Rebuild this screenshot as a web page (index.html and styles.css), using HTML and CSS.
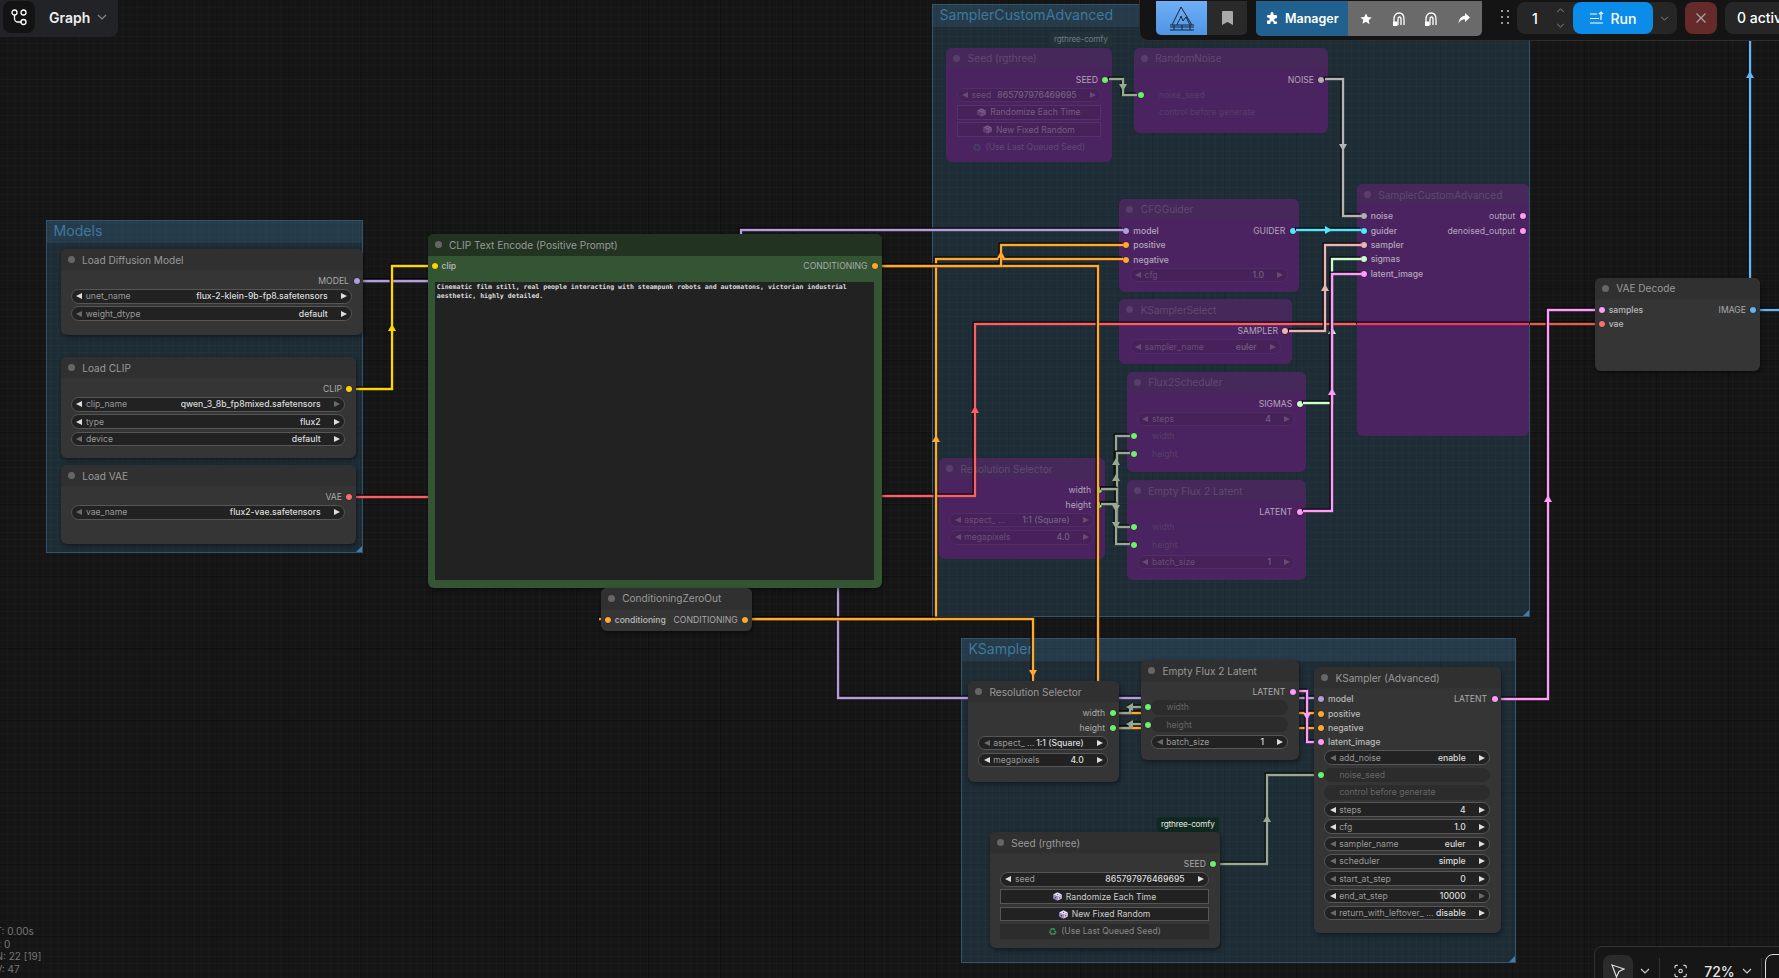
FILE: index.html
```html
<!DOCTYPE html>
<html lang="en">
<head>
    <meta charset="UTF-8">
    <title>ComfyUI Graph</title>
    <link rel="stylesheet" href="styles.css">
</head>
<body>
    <svg class="defs">
        <defs>
            <path id="arrow" d="M0-4 4 3H-4Z"/>
            <symbol id="dice" viewBox="0 0 10 10">
                <path d="M5 .2 9.800 2.700 5 5.200.2 2.700Z" fill="#ece8f4"/>
                <path d="M.2 2.700 5 5.200v4.600L.2 7.300Z" fill="#a890cc"/>
                <path d="M9.800 2.700 5 5.200v4.600l4.800-2.500Z" fill="#d4c8e8"/>
                <circle cx="5" cy="2.700" r=".8" fill="#7a4fa8"/>
                <circle cx="2.600" cy="6.300" r=".8" fill="#4d2f7a"/>
                <circle cx="7.400" cy="6.300" r=".8" fill="#7a4fa8"/>
            </symbol>
            <symbol id="arch" viewBox="0 0 12 14">
                <path d="M1 13V7.500C1 3.500 3 1 6 1s5 2.500 5 6.500V13" fill="none" stroke="#fff" stroke-width="1.300"/>
                <path d="M5 13V7c0-1 .5-2 1.300-2S8 6 8 7v6" fill="none" stroke="#fff" stroke-width="1.300"/>
                <rect x="0" y="9.500" width="4.500" height="4.500" fill="#fff"/>
            </symbol>
        </defs>
    </svg>

    <div class="canvas">
        <!-- groups -->
        <div class="group g-models">
            <div class="group-title">Models</div>
        </div>
        <div class="group g-custom">
            <div class="group-title">SamplerCustomAdvanced</div>
        </div>
        <div class="group g-ksampler">
            <div class="group-title">KSampler</div>
        </div>

        <!-- bypassed nodes, the links run over these -->
        <div class="badge badge-dim">rgthree-comfy</div>
        <div class="node bypass n-seed-by">
            <div class="node-title"><i class="dot"></i>Seed (rgthree)</div>
            <div class="slots">
                <div class="slot"><span></span><span class="out">SEED<i class="port p-int"></i></span></div>
            </div>
            <div class="widgets">
                <div class="widget"><i class="tri-l"></i><span class="w-name">seed</span><span class="w-val">865797976469695</span><i class="tri-r"></i></div>
                <div class="btn"><svg class="dice"><use href="#dice"/></svg>Randomize Each Time</div>
                <div class="btn"><svg class="dice"><use href="#dice"/></svg>New Fixed Random</div>
                <div class="btn btn-off"><span class="recycle">♻</span>(Use Last Queued Seed)</div>
            </div>
        </div>
        <div class="node bypass n-noise">
            <div class="node-title"><i class="dot"></i>RandomNoise</div>
            <div class="slots">
                <div class="slot"><span></span><span class="out">NOISE<i class="port p-noise"></i></span></div>
            </div>
            <div class="widgets">
                <div class="widget row-off"><i class="port p-int on-widget"></i>noise_seed</div>
                <div class="widget row-off">control before generate</div>
            </div>
        </div>
        <div class="node bypass n-guider">
            <div class="node-title"><i class="dot"></i>CFGGuider</div>
            <div class="slots">
                <div class="slot"><span class="in"><i class="port p-model"></i>model</span><span class="out">GUIDER<i class="port p-guider"></i></span></div>
                <div class="slot"><span class="in"><i class="port p-cond"></i>positive</span></div>
                <div class="slot"><span class="in"><i class="port p-cond"></i>negative</span></div>
            </div>
            <div class="widgets">
                <div class="widget"><i class="tri-l"></i><span class="w-name">cfg</span><span class="w-val">1.0</span><i class="tri-r"></i></div>
            </div>
        </div>
        <div class="node bypass n-select">
            <div class="node-title"><i class="dot"></i>KSamplerSelect</div>
            <div class="slots">
                <div class="slot"><span></span><span class="out">SAMPLER<i class="port p-sampler"></i></span></div>
            </div>
            <div class="widgets">
                <div class="widget"><i class="tri-l"></i><span class="w-name">sampler_name</span><span class="w-val">euler</span><i class="tri-r"></i></div>
            </div>
        </div>
        <div class="node bypass n-sched">
            <div class="node-title"><i class="dot"></i>Flux2Scheduler</div>
            <div class="slots">
                <div class="slot"><span></span><span class="out">SIGMAS<i class="port p-sigmas"></i></span></div>
            </div>
            <div class="widgets">
                <div class="widget"><i class="tri-l"></i><span class="w-name">steps</span><span class="w-val">4</span><i class="tri-r"></i></div>
                <div class="widget row-off"><i class="port p-int on-widget"></i>width</div>
                <div class="widget row-off"><i class="port p-int on-widget"></i>height</div>
            </div>
        </div>
        <div class="node bypass n-latent-by">
            <div class="node-title"><i class="dot"></i>Empty Flux 2 Latent</div>
            <div class="slots">
                <div class="slot"><span></span><span class="out">LATENT<i class="port p-latent"></i></span></div>
            </div>
            <div class="widgets">
                <div class="widget row-off"><i class="port p-int on-widget"></i>width</div>
                <div class="widget row-off"><i class="port p-int on-widget"></i>height</div>
                <div class="widget"><i class="tri-l"></i><span class="w-name">batch_size</span><span class="w-val">1</span><i class="tri-r"></i></div>
            </div>
        </div>
        <div class="node bypass n-res-by">
            <div class="node-title"><i class="dot"></i>Resolution Selector</div>
            <div class="slots">
                <div class="slot"><span></span><span class="out">width<i class="port p-int"></i></span></div>
                <div class="slot"><span></span><span class="out">height<i class="port p-int"></i></span></div>
            </div>
            <div class="widgets">
                <div class="widget"><i class="tri-l"></i><span class="w-name">aspect_ ...</span><span class="w-val">1:1 (Square)</span><i class="tri-r"></i></div>
                <div class="widget"><i class="tri-l"></i><span class="w-name">megapixels</span><span class="w-val">4.0</span><i class="tri-r"></i></div>
            </div>
        </div>
        <div class="node bypass n-custom">
            <div class="node-title"><i class="dot"></i>SamplerCustomAdvanced</div>
            <div class="slots">
                <div class="slot"><span class="in"><i class="port p-noise"></i>noise</span><span class="out">output<i class="port p-latent"></i></span></div>
                <div class="slot"><span class="in"><i class="port p-guider"></i>guider</span><span class="out">denoised_output<i class="port p-latent"></i></span></div>
                <div class="slot"><span class="in"><i class="port p-sampler"></i>sampler</span></div>
                <div class="slot"><span class="in"><i class="port p-sigmas"></i>sigmas</span></div>
                <div class="slot"><span class="in"><i class="port p-latent"></i>latent_image</span></div>
            </div>
        </div>

        <!-- links -->
        <svg class="wires" width="1779" height="978">
            <g class="c-model">
                <path class="wire" d="M363 281H741V230H1123"/>
                <path class="wire" d="M363 281H838V698H1320"/>
            </g>
            <g class="c-clip">
                <path class="wire" d="M356 389H392V266H430"/>
                <use href="#arrow" transform="translate(392 328)"/>
            </g>
            <g class="c-vae">
                <path class="wire" d="M356 497H430"/>
                <path class="wire" d="M880 496H975V324H1357"/>
                <use href="#arrow" transform="translate(975 410)"/>
            </g>
            <path class="wire c-vae-over" d="M1357 324H1530"/>
            <path class="wire c-vae-out" d="M1530 324H1600"/>
            <g class="c-cond">
                <path class="wire" d="M599 619H602"/>
                <path class="wire" d="M745 619H936V259H1123"/>
                <path class="wire" d="M745 619H1033V728H1320"/>
                <path class="wire" d="M878 266H1098V713H1320"/>
                <path class="wire" d="M878 266H1001V245H1123"/>
                <use href="#arrow" transform="translate(936 439)"/>
                <use href="#arrow" transform="translate(1001 255)"/>
                <use href="#arrow" transform="translate(1033 673) rotate(180)"/>
            </g>
            <g class="c-int">
                <path class="wire" d="M1109 79H1123V95H1137"/>
                <use href="#arrow" transform="translate(1123 87) rotate(180)"/>
                <path class="wire" d="M1101 489H1116V436H1130"/>
                <path class="wire" d="M1101 504H1117V453H1130"/>
                <path class="wire" d="M1101 489H1117V527H1130"/>
                <path class="wire" d="M1101 504H1116V544H1130"/>
                <use href="#arrow" transform="translate(1116 462)"/>
                <use href="#arrow" transform="translate(1116 478)"/>
                <use href="#arrow" transform="translate(1116 508) rotate(180)"/>
                <use href="#arrow" transform="translate(1116 525) rotate(180)"/>
                <path class="wire" d="M1112 713H1130V707H1148"/>
                <path class="wire" d="M1112 728H1130V724H1148"/>
                <use href="#arrow" transform="translate(1130 707) rotate(-90)"/>
                <use href="#arrow" transform="translate(1130 724) rotate(-90)"/>
                <path class="wire" d="M1214 864H1267V775H1320"/>
                <use href="#arrow" transform="translate(1267 819)"/>
            </g>
            <g class="c-noise">
                <path class="wire" d="M1325 79H1343V216H1361"/>
                <use href="#arrow" transform="translate(1343 147) rotate(180)"/>
            </g>
            <g class="c-guider">
                <path class="wire" d="M1296 230H1361"/>
                <use href="#arrow" transform="translate(1328 230) rotate(90)"/>
            </g>
            <g class="c-sampler">
                <path class="wire" d="M1289 331H1325V245H1361"/>
                <use href="#arrow" transform="translate(1325 288)"/>
            </g>
            <g class="c-sigmas">
                <path class="wire" d="M1303 403H1332V259H1361"/>
                <use href="#arrow" transform="translate(1332 331)"/>
            </g>
            <g class="c-latent">
                <path class="wire" d="M1303 511H1332V274H1361"/>
                <use href="#arrow" transform="translate(1332 392)"/>
                <path class="wire" d="M1493 699H1548V310H1602"/>
                <use href="#arrow" transform="translate(1548 499)"/>
                <path class="wire" d="M1292 691H1307V742H1320"/>
                <use href="#arrow" transform="translate(1307 716) rotate(180)"/>
            </g>
            <g class="c-image">
                <path class="wire" d="M1750 0V290"/>
                <path class="wire" d="M1753 310H1779"/>
                <use href="#arrow" transform="translate(1750 75)"/>
            </g>
        </svg>

        <!-- regular nodes -->
        <div class="node n-unet">
            <div class="node-title"><i class="dot"></i>Load Diffusion Model</div>
            <div class="slots">
                <div class="slot"><span></span><span class="out">MODEL<i class="port p-model"></i></span></div>
            </div>
            <div class="widgets">
                <div class="widget"><i class="tri-l"></i><span class="w-name">unet_name</span><span class="w-val">flux-2-klein-9b-fp8.safetensors</span><i class="tri-r"></i></div>
                <div class="widget"><i class="tri-l off"></i><span class="w-name">weight_dtype</span><span class="w-val">default</span><i class="tri-r"></i></div>
            </div>
        </div>
        <div class="node n-clip">
            <div class="node-title"><i class="dot"></i>Load CLIP</div>
            <div class="slots">
                <div class="slot"><span></span><span class="out">CLIP<i class="port p-clip"></i></span></div>
            </div>
            <div class="widgets">
                <div class="widget"><i class="tri-l"></i><span class="w-name">clip_name</span><span class="w-val">qwen_3_8b_fp8mixed.safetensors</span><i class="tri-r off"></i></div>
                <div class="widget"><i class="tri-l"></i><span class="w-name">type</span><span class="w-val">flux2</span><i class="tri-r"></i></div>
                <div class="widget"><i class="tri-l off"></i><span class="w-name">device</span><span class="w-val">default</span><i class="tri-r"></i></div>
            </div>
        </div>
        <div class="node n-vae">
            <div class="node-title"><i class="dot"></i>Load VAE</div>
            <div class="slots">
                <div class="slot"><span></span><span class="out">VAE<i class="port p-vae"></i></span></div>
            </div>
            <div class="widgets">
                <div class="widget"><i class="tri-l off"></i><span class="w-name">vae_name</span><span class="w-val">flux2-vae.safetensors</span><i class="tri-r"></i></div>
            </div>
        </div>
        <div class="node green n-prompt">
            <div class="node-title"><i class="dot"></i>CLIP Text Encode (Positive Prompt)</div>
            <div class="slots">
                <div class="slot"><span class="in"><i class="port p-clip"></i>clip</span><span class="out">CONDITIONING<i class="port p-cond"></i></span></div>
            </div>
            <div class="prompt">Cinematic film still, real people interacting with steampunk robots and automatons, victorian industrial aesthetic, highly detailed.</div>
        </div>
        <div class="node n-zero">
            <div class="node-title"><i class="dot"></i>ConditioningZeroOut</div>
            <div class="slots">
                <div class="slot"><span class="in"><i class="port p-cond"></i>conditioning</span><span class="out">CONDITIONING<i class="port p-cond"></i></span></div>
            </div>
        </div>
        <div class="node n-res">
            <div class="node-title"><i class="dot"></i>Resolution Selector</div>
            <div class="slots">
                <div class="slot"><span></span><span class="out">width<i class="port p-int"></i></span></div>
                <div class="slot"><span></span><span class="out">height<i class="port p-int"></i></span></div>
            </div>
            <div class="widgets">
                <div class="widget"><i class="tri-l off"></i><span class="w-name">aspect_ ...</span><span class="w-val">1:1 (Square)</span><i class="tri-r"></i></div>
                <div class="widget"><i class="tri-l"></i><span class="w-name">megapixels</span><span class="w-val">4.0</span><i class="tri-r"></i></div>
            </div>
        </div>
        <div class="node n-latent">
            <div class="node-title"><i class="dot"></i>Empty Flux 2 Latent</div>
            <div class="slots">
                <div class="slot"><span></span><span class="out">LATENT<i class="port p-latent"></i></span></div>
            </div>
            <div class="widgets">
                <div class="widget row-off"><i class="port p-int on-widget"></i>width</div>
                <div class="widget row-off"><i class="port p-int on-widget"></i>height</div>
                <div class="widget"><i class="tri-l off"></i><span class="w-name">batch_size</span><span class="w-val">1</span><i class="tri-r"></i></div>
            </div>
        </div>
        <div class="node n-adv">
            <div class="node-title"><i class="dot"></i>KSampler (Advanced)</div>
            <div class="slots">
                <div class="slot"><span class="in"><i class="port p-model"></i>model</span><span class="out">LATENT<i class="port p-latent"></i></span></div>
                <div class="slot"><span class="in"><i class="port p-cond"></i>positive</span></div>
                <div class="slot"><span class="in"><i class="port p-cond"></i>negative</span></div>
                <div class="slot"><span class="in"><i class="port p-latent"></i>latent_image</span></div>
            </div>
            <div class="widgets">
                <div class="widget"><i class="tri-l off"></i><span class="w-name">add_noise</span><span class="w-val">enable</span><i class="tri-r"></i></div>
                <div class="widget row-off"><i class="port p-int on-widget"></i>noise_seed</div>
                <div class="widget row-off">control before generate</div>
                <div class="widget"><i class="tri-l"></i><span class="w-name">steps</span><span class="w-val">4</span><i class="tri-r"></i></div>
                <div class="widget"><i class="tri-l"></i><span class="w-name">cfg</span><span class="w-val">1.0</span><i class="tri-r"></i></div>
                <div class="widget"><i class="tri-l off"></i><span class="w-name">sampler_name</span><span class="w-val">euler</span><i class="tri-r"></i></div>
                <div class="widget"><i class="tri-l off"></i><span class="w-name">scheduler</span><span class="w-val">simple</span><i class="tri-r"></i></div>
                <div class="widget"><i class="tri-l off"></i><span class="w-name">start_at_step</span><span class="w-val">0</span><i class="tri-r"></i></div>
                <div class="widget"><i class="tri-l"></i><span class="w-name">end_at_step</span><span class="w-val">10000</span><i class="tri-r off"></i></div>
                <div class="widget"><i class="tri-l off"></i><span class="w-name">return_with_leftover_ ...</span><span class="w-val">disable</span><i class="tri-r"></i></div>
            </div>
        </div>
        <div class="badge">rgthree-comfy</div>
        <div class="node n-seed">
            <div class="node-title"><i class="dot"></i>Seed (rgthree)</div>
            <div class="slots">
                <div class="slot"><span></span><span class="out">SEED<i class="port p-int"></i></span></div>
            </div>
            <div class="widgets">
                <div class="widget"><i class="tri-l"></i><span class="w-name">seed</span><span class="w-val">865797976469695</span><i class="tri-r"></i></div>
                <div class="btn"><svg class="dice"><use href="#dice"/></svg>Randomize Each Time</div>
                <div class="btn"><svg class="dice"><use href="#dice"/></svg>New Fixed Random</div>
                <div class="btn btn-off"><span class="recycle">♻</span>(Use Last Queued Seed)</div>
            </div>
        </div>
        <div class="node n-decode">
            <div class="node-title"><i class="dot"></i>VAE Decode</div>
            <div class="slots">
                <div class="slot"><span class="in"><i class="port p-latent"></i>samples</span><span class="out">IMAGE<i class="port p-image"></i></span></div>
                <div class="slot"><span class="in"><i class="port p-vae"></i>vae</span></div>
            </div>
        </div>
    </div>

    <!-- app chrome -->
    <div class="tabbar">
        <div class="tab-icon">
            <svg width="17" height="17" viewBox="0 0 17 17" fill="none" stroke="#fff" stroke-width="1.3">
                <circle cx="3.5" cy="3.5" r="2.5"/>
                <circle cx="12.5" cy="3.5" r="2.5"/>
                <circle cx="12.5" cy="13" r="2.5"/>
                <path d="M3.5 6v3.5a3.5 3.5 0 0 0 3.5 3.5h3"/>
            </svg>
        </div>
        <span class="tab-name">Graph</span>
        <svg class="chev" width="10" height="6" viewBox="0 0 10 6"><path d="M1 1l4 4 4-4"/></svg>
    </div>

    <div class="toolbar">
        <div class="tb-logo">
            <svg width="26" height="26" viewBox="0 0 26 26" fill="none" stroke="#14243c" stroke-width="1">
                <path d="M3 20 12 2l11 18"/>
                <path d="M8 20c1-4 3-5 4-9l2 5 3-4 4 8"/>
                <path d="M1 20h24M1 22h24M1 25h24M5 20v5M13 20v5M21 20v5"/>
            </svg>
        </div>
        <div class="tb-bookmark">
            <svg width="11" height="14" viewBox="0 0 11 14"><path d="M0 1a1 1 0 0 1 1-1h9a1 1 0 0 1 1 1v13l-5.500-3L0 14Z" fill="#a8a8a8"/></svg>
        </div>
        <div class="tb-manager">
            <svg width="13" height="13" viewBox="0 0 13 13"><path fill="#fff" d="M4.500 1.500a1.500 1.500 0 0 1 3 0V3H10a1 1 0 0 1 1 1v2.200H9.800a1.600 1.600 0 0 0 0 3.200H11V11a1 1 0 0 1-1 1H7.600v-1.100a1.600 1.600 0 0 0-3.200 0V12H2a1 1 0 0 1-1-1V8.600h1.100a1.600 1.600 0 0 0 0-3.200H1V4a1 1 0 0 1 1-1h2.500z"/></svg>
            Manager
        </div>
        <div class="tb-tools">
            <svg width="12" height="12" viewBox="0 0 12 12"><path fill="#fff" d="M6 .5l1.700 3.600 3.900.5-2.900 2.700.8 3.900L6 8.800l-3.500 1.900.8-3.900L.4 4.600l3.900-.5z"/></svg>
            <svg width="12" height="14"><use href="#arch"/></svg>
            <svg width="12" height="14"><use href="#arch"/></svg>
            <svg width="12" height="11" viewBox="0 0 12 11"><path fill="#fff" d="M7 0l5 4.500L7 9V6.300C4 6.300 2 7.300.5 10.500 1 6 3 3 7 2.700z"/></svg>
        </div>
        <div class="tb-handle"><i></i><i></i><i></i><i></i><i></i><i></i></div>
        <div class="queue">
            <span class="queue-count">1</span>
            <div class="queue-spin">
                <svg class="chev" width="9" height="5" viewBox="0 0 10 6"><path d="M1 5l4-4 4 4"/></svg>
                <svg class="chev" width="9" height="5" viewBox="0 0 10 6"><path d="M1 1l4 4 4-4"/></svg>
            </div>
            <div class="run">
                <svg width="14" height="14" viewBox="0 0 14 14" fill="none" stroke="#fff" stroke-width="1.2"><path d="M0 3h7M0 7.500h9M0 12h13M11 9V1M8.800 3.200 11 1l2.200 2.200"/></svg>
                Run
            </div>
            <svg class="chev queue-caret" width="9" height="5" viewBox="0 0 10 6"><path d="M1 1l4 4 4-4"/></svg>
        </div>
        <div class="tb-stop">
            <svg width="10" height="10" viewBox="0 0 10 10"><path d="M.5.500l9 9M9.500.500l-9 9" stroke="#aaa" stroke-width="1.100"/></svg>
        </div>
        <div class="tb-active">0 active</div>
    </div>

    <div class="stats">
        <div>T: 0.00s</div>
        <div>I: 0</div>
        <div>N: 22 [19]</div>
        <div>V: 47</div>
    </div>

    <div class="viewbar">
        <div class="vb-select">
            <svg width="14" height="14" viewBox="0 0 14 14" fill="none" stroke="#ddd" stroke-width="1.200"><path d="M1 1l12 4-5 2.500L5.500 13Z"/></svg>
        </div>
        <svg class="chev vb-chev" width="10" height="6" viewBox="0 0 10 6"><path d="M1 1l4 4 4-4"/></svg>
        <i class="vb-sep"></i>
        <svg class="vb-focus" width="14" height="14" viewBox="0 0 14 14" fill="none" stroke="#ddd" stroke-width="1.200"><path d="M1 4V2.500A1.500 1.500 0 0 1 2.500 1H4M10 1h1.500A1.500 1.500 0 0 1 13 2.500V4M13 10v1.500a1.500 1.500 0 0 1-1.500 1.500H10M4 13H2.500A1.500 1.500 0 0 1 1 11.500V10"/><circle cx="7" cy="7" r="1.800"/></svg>
        <span class="vb-zoom">72%</span>
        <svg class="chev vb-chev" width="10" height="6" viewBox="0 0 10 6"><path d="M1 1l4 4 4-4"/></svg>
        <i class="vb-sep"></i>
        <div class="vb-map"></div>
    </div>
</body>
</html>
```

FILE: styles.css
```css
* {
    box-sizing: border-box;
    margin: 0;
    padding: 0;
}
body {
    width: 1779px;
    height: 978px;
    overflow: hidden;
    position: relative;
    font-family: 'Inter', 'Liberation Sans', sans-serif;
    background: #151515;
}
i {
    display: block;
}
.defs {
    position: absolute;
    width: 0;
    height: 0;
}

/* canvas and its grid */
.canvas {
    position: absolute;
    inset: 0;
    background-color: #151515;
    background-image:
        linear-gradient(rgba(0, 0, 0, 0.22) 1px, transparent 1px),
        linear-gradient(90deg, rgba(0, 0, 0, 0.22) 1px, transparent 1px),
        linear-gradient(rgba(255, 255, 255, 0.018) 1px, transparent 1px),
        linear-gradient(90deg, rgba(255, 255, 255, 0.018) 1px, transparent 1px);
    background-size: 72px 72px, 72px 72px, 7.2px 7.2px, 7.2px 7.2px;
}

/* groups */
.group {
    position: absolute;
    background: rgba(63, 120, 158, 0.24);
    border: 1px solid rgba(63, 120, 158, 0.55);
}
.group::after {
    content: "";
    position: absolute;
    right: 0;
    bottom: 0;
    border-style: solid;
    border-width: 0 0 6px 6px;
    border-color: transparent transparent #3f7fb0 transparent;
}
.group-title {
    height: 21.5px;
    padding-left: 6.5px;
    font-size: 14.1px;
    line-height: 20.5px;
    color: #3f789e;
    background: rgba(63, 120, 158, 0.2);
}
.g-models {
    left: 46px;
    top: 220px;
    width: 317px;
    height: 332.5px;
}
.g-custom {
    left: 932px;
    top: 4px;
    width: 598px;
    height: 613px;
}
.g-ksampler {
    left: 961px;
    top: 638px;
    width: 555px;
    height: 324.5px;
}

/* nodes */
.node {
    position: absolute;
    display: flex;
    flex-direction: column;
    background: #353535;
    border-radius: 6px;
    box-shadow: 1px 2px 4px rgba(0, 0, 0, 0.45);
    font-size: 8.64px;
    color: #aaa;
    white-space: nowrap;
}
.node-title {
    flex: none;
    display: flex;
    align-items: center;
    gap: 7.5px;
    height: 22px;
    padding-left: 7px;
    font-size: 10.08px;
    color: #999;
    background: #303030;
    border-radius: 6px 6px 0 0;
    border-bottom: 1px solid #333;
}
.dot {
    width: 7px;
    height: 7px;
    border-radius: 50%;
    background: #666;
}
.slots {
    padding-top: 3px;
}
.slot {
    display: flex;
    justify-content: space-between;
    align-items: center;
    height: 14.4px;
    padding: 0 3.5px 0 4px;
}
.in,
.out {
    display: flex;
    align-items: center;
}
.in {
    gap: 4px;
    color: #bbb;
    font-weight: 500;
}
.out {
    gap: 4.5px;
}
.port {
    flex: none;
    width: 6px;
    height: 6px;
    border-radius: 50%;
    box-shadow: 0 0 1px #000;
}
.p-model { background: #b39ddb; }
.p-clip { background: #ffd500; }
.p-vae { background: #ff6e6e; }
.p-cond { background: #ffa931; }
.p-int { background: #6ef06e; }
.p-noise { background: #b0b0b0; }
.p-guider { background: #4fe8ff; }
.p-sampler { background: #ecb4b4; }
.p-sigmas { background: #cdffcd; }
.p-latent { background: #ff9cf9; }
.p-image { background: #64b5f6; }

/* widgets */
.widgets {
    display: flex;
    flex-direction: column;
    gap: 2.7px;
    padding: 0.8px 11px 0 10.4px;
}
.widget {
    position: relative;
    display: flex;
    align-items: center;
    flex: none;
    height: 14.6px;
    padding: 0 4.3px;
    background: #222;
    border: 1px solid #565656;
    border-radius: 8px;
    color: #999;
}
.tri-l,
.tri-r {
    flex: none;
    width: 0;
    height: 0;
    border-style: solid;
    border-color: transparent;
}
.tri-l {
    border-width: 3.5px 6.5px 3.5px 0;
    border-right-color: #ddd;
}
.tri-r {
    border-width: 3.5px 0 3.5px 6.5px;
    border-left-color: #ddd;
}
.tri-l.off {
    border-right-color: #6a6a6a;
}
.tri-r.off {
    border-left-color: #6a6a6a;
}
.w-name {
    margin-left: 3.5px;
}
.w-val {
    margin: 0 13px 0 auto;
    color: #ddd;
    font-weight: 500;
}
.row-off {
    padding-left: 14px;
    background: #2c2c2c;
    border-color: #2c2c2c;
    color: #666;
}
.on-widget {
    position: absolute;
    left: -7.5px;
    top: 3.300px;
}
.btn {
    display: flex;
    justify-content: center;
    align-items: center;
    gap: 4px;
    flex: none;
    height: 14.6px;
    background: #222;
    border: 1px solid #565656;
    color: #ccc;
}
.btn-off {
    background: #2c2c2c;
    border-color: #2c2c2c;
    color: #888;
}
.dice {
    width: 9px;
    height: 9px;
}
.recycle {
    font-family: 'DejaVu Sans', sans-serif;
    font-size: 10px;
    color: #3f8f63;
}
.badge {
    position: absolute;
    left: 1157px;
    top: 816.500px;
    height: 15px;
    padding: 0 4px;
    font-size: 8.200px;
    line-height: 15px;
    letter-spacing: -0.2px;
    color: #e6e6e6;
    background: #10291e;
    border-radius: 3px;
}
.badge-dim {
    left: 1050px;
    top: 31.500px;
    color: #6e7a80;
    background: rgba(40, 60, 60, 0.35);
}

/* bypassed nodes */
.bypass {
    background: #4b2360;
    box-shadow: none;
    color: #b4a6ba;
}
.bypass .node-title {
    background: #47285a;
    border-bottom-color: #4b2360;
    color: #5f4a70;
}
.bypass .dot {
    background: #5a3f6c;
}
.bypass .in {
    color: #b4a6ba;
}
.bypass .widget {
    background: #47215a;
    border-color: #4f2e62;
    color: #674f78;
}
.bypass .w-val {
    color: #756082;
}
.bypass .tri-l {
    border-right-color: #644c72;
}
.bypass .tri-r {
    border-left-color: #644c72;
}
.bypass .row-off {
    border-color: #4a2460;
    background: #4a2460;
    color: #573e69;
}
.bypass .btn {
    background: #47215a;
    border-color: #53336a;
    color: #735e84;
}
.bypass .btn-off {
    background: #4a2460;
    border-color: #4a2460;
    color: #5e4870;
}
.bypass .dice,
.bypass .recycle {
    opacity: 0.3;
}

/* green prompt node */
.green {
    background: #335533;
}
.green .node-title {
    background: #223322;
    border-bottom-color: #223322;
}
.prompt {
    flex: 1;
    margin: 8.600px 7.400px 7.300px 7.300px;
    padding: 1px 2px;
    background: #222;
    color: #ddd;
    font-family: 'DejaVu Sans Mono', 'Liberation Mono', monospace;
    font-size: 6.560px;
    font-weight: bold;
    line-height: 9.500px;
    white-space: normal;
}

/* node places on the canvas */
.n-unet { left: 60.5px; top: 249px; width: 302.5px; height: 86px; }
.n-clip { left: 60.7px; top: 357px; width: 295.3px; height: 101px; }
.n-vae { left: 60.7px; top: 465px; width: 295.3px; height: 79px; }
.n-prompt { left: 427.5px; top: 234px; width: 454px; height: 353.5px; }
.n-zero { left: 600.7px; top: 587.7px; width: 151px; height: 43px; }
.n-seed-by { left: 946.3px; top: 47.7px; width: 165.7px; height: 114.6px; }
.n-noise { left: 1133.7px; top: 47.7px; width: 194.3px; height: 85.8px; }
.n-guider { left: 1119.3px; top: 198.7px; width: 180px; height: 93px; }
.n-select { left: 1119.3px; top: 299.3px; width: 172.7px; height: 64.4px; }
.n-sched { left: 1126.7px; top: 371.7px; width: 179.6px; height: 100px; }
.n-latent-by { left: 1126.7px; top: 480px; width: 179.6px; height: 99.7px; }
.n-res-by { left: 939px; top: 458.3px; width: 166px; height: 100.4px; }
.n-custom { left: 1356.7px; top: 184px; width: 172.6px; height: 251.7px; }
.n-decode { left: 1594.7px; top: 277.7px; width: 165.3px; height: 93.3px; }
.n-res { left: 968px; top: 681px; width: 151px; height: 101px; }
.n-latent { left: 1141px; top: 660px; width: 158.3px; height: 100px; }
.n-adv { left: 1314px; top: 667px; width: 187px; height: 266px; }
.n-seed { left: 989.7px; top: 832px; width: 230.3px; height: 115.7px; }

/* links */
.wires {
    position: absolute;
    left: 0;
    top: 0;
}
.wire {
    fill: none;
    stroke: currentColor;
    stroke-width: 2.4;
    filter: drop-shadow(0.5px 0.5px 0.5px #000) drop-shadow(-0.5px -0.5px 0.5px #000);
}
.wires use {
    fill: currentColor;
}
.c-model { color: #b39ddb; }
.c-clip { color: #ffd500; }
.c-vae { color: #fb6068; }
.c-vae-over { color: #e83a6e; }
.c-vae-out { color: #e0604f; }
.c-cond { color: #ffa931; }
.c-int { color: #97a893; }
.c-noise { color: #b4b4b4; }
.c-guider { color: #4fe8ff; }
.c-sampler { color: #ecb4b4; }
.c-sigmas { color: #cdffcd; }
.c-latent { color: #ff9cf9; }
.c-image { color: #64b5f6; }

/* top left tab */
.tabbar {
    position: absolute;
    left: 0;
    top: 0;
    display: flex;
    align-items: center;
    width: 118px;
    height: 37px;
    padding: 0 0 3px 3px;
    background: #222326;
    border-radius: 0 0 8px 0;
}
.tab-icon {
    display: flex;
    justify-content: center;
    align-items: center;
    width: 32px;
    height: 32px;
    background: #131313;
    border-radius: 8px;
}
.tab-name {
    margin: 0 7px 0 14px;
    font-size: 14px;
    font-weight: 600;
    color: #eee;
}
.chev {
    flex: none;
    fill: none;
    stroke: #888;
    stroke-width: 1.2;
}

/* top toolbar */
.toolbar {
    position: absolute;
    left: 1139px;
    width: 680px;
    top: -1px;
    height: 42px;
    display: flex;
    align-items: flex-start;
    padding: 1px 0 0 16px;
    background: #141414;
    border: 1px solid #2e2e2e;
    border-radius: 0 0 0 9px;
    color: #fff;
    font-size: 14px;
    white-space: nowrap;
}
.toolbar > * {
    flex: none;
}
.tb-logo,
.tb-bookmark {
    display: flex;
    justify-content: center;
    align-items: center;
    height: 34px;
}
.tb-logo {
    width: 51px;
    background: linear-gradient(#6fb0f5, #4f95e4);
    border-radius: 0 0 0 5px;
}
.tb-bookmark {
    width: 40px;
    background: #2a2a2a;
    border-radius: 0 0 5px 0;
}
.tb-manager {
    display: flex;
    align-items: center;
    gap: 6px;
    height: 35px;
    width: 92px;
    margin-left: 9px;
    padding-left: 10px;
    font-size: 12.500px;
    font-weight: 600;
    background: #20618f;
    border-radius: 0 0 0 5px;
}
.tb-tools {
    display: flex;
    justify-content: space-around;
    align-items: center;
    width: 134px;
    height: 35px;
    padding: 0 2px;
    background: #6a6a6a;
    border-radius: 0 0 5px 0;
}
.tb-handle {
    display: grid;
    grid-template-columns: 2px 2px;
    gap: 4px 4px;
    margin: 9px 8px 0 19px;
}
.tb-handle i {
    width: 2px;
    height: 2px;
    background: #9a9a9a;
}
.queue {
    display: flex;
    align-items: center;
    width: 160px;
    height: 32px;
    margin-top: 1px;
    background: #262626;
    border-radius: 8px;
}
.queue-count {
    width: 36px;
    text-align: center;
    font-weight: 500;
}
.queue-spin {
    display: flex;
    flex-direction: column;
    gap: 10px;
    width: 20px;
    padding-left: 3px;
}
.run {
    display: flex;
    justify-content: center;
    align-items: center;
    gap: 7px;
    width: 80px;
    height: 32px;
    background: #0b8ce9;
    border-radius: 8px;
    font-weight: 500;
}
.queue-caret {
    margin-left: 7px;
}
.tb-stop {
    display: flex;
    justify-content: center;
    align-items: center;
    width: 32px;
    height: 32px;
    margin: 1px 8px 0;
    background: #652b2b;
    border-radius: 8px;
}
.tb-active {
    width: 80px;
    height: 32px;
    margin-top: 1px;
    padding-left: 12px;
    line-height: 32px;
    font-weight: 500;
    background: #262626;
    border-radius: 8px 0 0 8px;
}

/* stats, cut off by the window edge */
.stats {
    position: absolute;
    left: -4.5px;
    top: 925px;
    font-size: 10px;
    line-height: 12.700px;
    color: #777;
}

/* bottom right controls */
.viewbar {
    position: absolute;
    left: 1594px;
    top: 946px;
    width: 200px;
    height: 50px;
    display: flex;
    align-items: center;
    padding-left: 8px;
    background: #161616;
    border: 1px solid #333;
    border-radius: 8px 0 0 8px;
}
.vb-select {
    display: flex;
    justify-content: center;
    align-items: center;
    width: 32px;
    height: 32px;
    background: #2b2b2b;
    border-radius: 8px;
}
.vb-chev {
    margin-left: 7px;
    stroke: #ccc;
}
.vb-sep {
    width: 1px;
    height: 26px;
    margin-left: 9px;
    background: #333;
}
.vb-focus {
    margin-left: 14px;
}
.vb-zoom {
    margin-left: 17px;
    font-size: 14px;
    font-weight: 500;
    color: #e6e6e6;
}
.vb-map {
    width: 30px;
    height: 34px;
    margin-left: 3px;
    border: 1px solid #ddd;
    border-radius: 8px;
}
```
